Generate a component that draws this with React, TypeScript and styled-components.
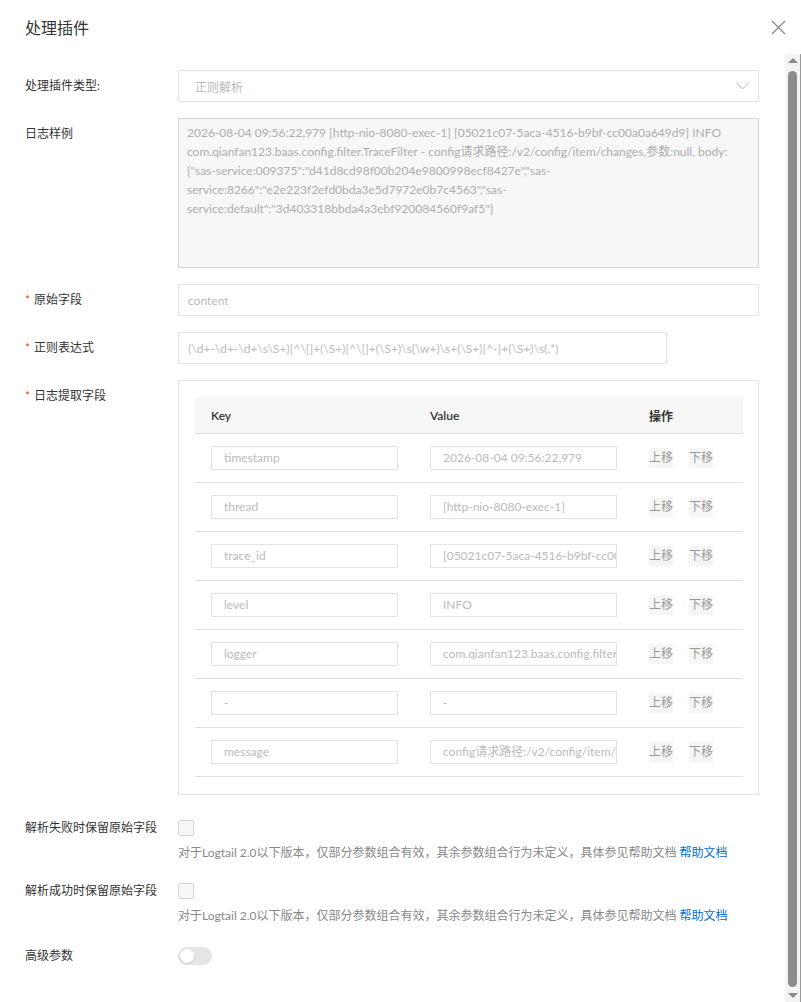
import React from "react";
import styled, { createGlobalStyle } from "styled-components";

const Global = createGlobalStyle`
  html, body { margin: 0; padding: 0; background: #fff; }
  body { font-family: Lato, "Noto Sans CJK SC", sans-serif; font-size: 12px; color: #333; }
  * { box-sizing: border-box; }
`;

const Modal = styled.div`
  width: 801px;
  height: 1002px;
  display: flex;
  flex-direction: column;
  background: #fff;
  overflow: hidden;
`;

const Header = styled.div`
  height: 54px;
  flex: none;
  display: flex;
  align-items: center;
  justify-content: space-between;
  padding: 0 15px 0 25px;
`;

const Title = styled.div`
  font-size: 16px;
  color: #333;
  line-height: 20px;
  margin-top: 2px;
`;

const CloseBtn = styled.div`
  width: 16px;
  height: 16px;
  display: flex;
  align-items: center;
  justify-content: center;
  margin-top: 1px;
`;

const Body = styled.div`
  flex: 1;
  display: flex;
  min-height: 0;
`;

const Content = styled.div`
  flex: 1;
  padding: 16px 26px 0 25px;
`;

const ScrollCol = styled.div`
  width: 16px;
  flex: none;
  display: flex;
  flex-direction: column;
  align-items: center;
  background: #f3f3f3;
  border-right: 1px solid #9a9a9a;
  padding: 4px 0 4px 0;
`;

const Arrow = styled.div<{ $down?: boolean }>`
  width: 0;
  height: 0;
  border-left: 5px solid transparent;
  border-right: 5px solid transparent;
  ${(p) =>
    p.$down
      ? "border-top: 5px solid #8a8a8a; margin-top: 6px;"
      : "border-bottom: 5px solid #8a8a8a; margin-bottom: 6px;"}
  margin-left: 1px;
  flex: none;
`;

const Thumb = styled.div`
  flex: 1;
  width: 9px;
  margin-left: 0px;
  margin-top: 2px;
  border-radius: 5px;
  background: #8c8c8c;
`;

const FormItem = styled.div<{ $mb?: number }>`
  display: grid;
  grid-template-columns: 153px 1fr;
  margin-bottom: ${(p) => (p.$mb ?? 16)}px;
`;

const Label = styled.div`
  line-height: 32px;
  font-size: 12px;
  color: #333;
  white-space: nowrap;
`;

const Req = styled.span`
  color: #e84738;
  margin-right: 4px;
`;

const Control = styled.div`
  display: flex;
  flex-direction: column;
  min-width: 0;
`;

const InputBox = styled.div<{ $w?: number }>`
  height: 32px;
  width: ${(p) => (p.$w ? `${p.$w}px` : "100%")};
  border: 1px solid #e3e3e3;
  background: #fff;
  display: flex;
  align-items: center;
  padding: 0 9px;
  color: #bbb;
  font-size: 12px;
  white-space: nowrap;
  overflow: hidden;
`;

const SelectBox = styled(InputBox)`
  justify-content: space-between;
  padding: 0 9px 0 16px;
`;

const LogArea = styled.div`
  height: 150px;
  border: 1px solid #d6d6d6;
  background: #f7f7f7;
  padding: 4px 8px;
  color: #adadad;
  font-size: 12px;
  line-height: 19px;
`;

const LogLine = styled.div`
  white-space: nowrap;
`;

const ExtractBox = styled.div`
  border: 1px solid #e3e3e3;
  padding: 16px 16px 17px 16px;
`;

const Table = styled.div`
  width: 548px;
`;

const Row = styled.div<{ $head?: boolean }>`
  display: grid;
  grid-template-columns: 219px 219px 110px;
  align-items: center;
  height: ${(p) => (p.$head ? 37 : 49)}px;
  border-bottom: 1px solid #dedee2;
  background: ${(p) => (p.$head ? "#f7f7f7" : "#fff")};
`;

const HeadCell = styled.div`
  padding-left: 16px;
  color: #333;
  font-size: 12px;
  font-weight: 600;
`;

const Cell = styled.div`
  padding-left: 16px;
  display: flex;
  align-items: center;
  gap: 16px;
`;

const FieldBox = styled.div`
  width: 187px;
  height: 24px;
  border: 1px solid #e3e3e3;
  padding: 0 12px;
  line-height: 22px;
  color: #bbb;
  font-size: 12px;
  white-space: nowrap;
  overflow: hidden;
`;

const MoveBtn = styled.div`
  height: 20px;
  width: 24px;
  background: #f5f5f5;
  color: #999;
  font-size: 12px;
  line-height: 20px;
  text-align: center;
`;

const CheckLine = styled.div`
  height: 32px;
  display: flex;
  align-items: center;
`;

const CheckBox = styled.div`
  width: 16px;
  height: 16px;
  border: 1px solid #d4d4d4;
  border-radius: 2px;
  background: #f7f7f7;
`;

const Help = styled.div`
  line-height: 18px;
  color: #888;
  font-size: 12px;
  white-space: nowrap;
`;

const HelpLink = styled.span`
  color: #0070cc;
  margin-left: 3px;
`;

const Switch = styled.div`
  width: 34px;
  height: 18px;
  border-radius: 9px;
  background: #e5e5e5;
  display: flex;
  align-items: center;
  padding-left: 2px;
`;

const Knob = styled.div`
  width: 14px;
  height: 14px;
  border-radius: 50%;
  background: #fff;
  box-shadow: 0 1px 2px rgba(0, 0, 0, 0.15);
`;

const logLines = [
  "2026-08-04 09:56:22,979 [http-nio-8080-exec-1] [05021c07-5aca-4516-b9bf-cc00a0a649d9] INFO",
  "com.qianfan123.baas.config.filter.TraceFilter - config请求路径:/v2/config/item/changes,参数:null, body:",
  '{"sas-service:009375":"d41d8cd98f00b204e9800998ecf8427e","sas-',
  'service:8266":"e2e223f2efd0bda3e5d7972e0b7c4563","sas-',
  'service:default":"3d403318bbda4a3ebf920084560f9af5"}',
];

const fields: [string, string][] = [
  ["timestamp", "2026-08-04 09:56:22,979"],
  ["thread", "[http-nio-8080-exec-1]"],
  ["trace_id", "[05021c07-5aca-4516-b9bf-cc00a0a649d9]"],
  ["level", "INFO"],
  ["logger", "com.qianfan123.baas.config.filter.TraceFilter"],
  ["-", "-"],
  ["message", "config请求路径:/v2/config/item/changes,参数:null"],
];

const helpText = "对于Logtail 2.0以下版本，仅部分参数组合有效，其余参数组合行为未定义，具体参见帮助文档";

export default function App() {
  return (
    <>
      <Global />
      <Modal>
        <Header>
          <Title>处理插件</Title>
          <CloseBtn>
            <svg width="15" height="15" viewBox="0 0 15 15">
              <path d="M1 1 L14 14 M14 1 L1 14" stroke="#8a8a8a" strokeWidth="1.4" fill="none" />
            </svg>
          </CloseBtn>
        </Header>
        <Body>
          <Content>
            <FormItem>
              <Label>处理插件类型:</Label>
              <Control>
                <SelectBox>
                  <span>正则解析</span>
                  <svg width="13" height="8" viewBox="0 0 13 8">
                    <path d="M0.5 0.8 L6.5 7 L12.5 0.8" stroke="#b0b0b0" strokeWidth="1" fill="none" />
                  </svg>
                </SelectBox>
              </Control>
            </FormItem>
            <FormItem>
              <Label>日志样例</Label>
              <Control>
                <LogArea>
                  {logLines.map((l, i) => (
                    <LogLine key={i}>{l}</LogLine>
                  ))}
                </LogArea>
              </Control>
            </FormItem>
            <FormItem>
              <Label>
                <Req>*</Req>原始字段
              </Label>
              <Control>
                <InputBox>content</InputBox>
              </Control>
            </FormItem>
            <FormItem>
              <Label>
                <Req>*</Req>正则表达式
              </Label>
              <Control>
                <InputBox $w={489}>{"(\\d+-\\d+-\\d+\\s\\S+)[^\\[]+(\\S+)[^\\[]+(\\S+)\\s(\\w+)\\s+(\\S+)[^-]+(\\S+)\\s(.*)"}</InputBox>
              </Control>
            </FormItem>
            <FormItem $mb={17}>
              <Label>
                <Req>*</Req>日志提取字段
              </Label>
              <Control>
                <ExtractBox>
                  <Table>
                    <Row $head>
                      <HeadCell>Key</HeadCell>
                      <HeadCell>Value</HeadCell>
                      <HeadCell>操作</HeadCell>
                    </Row>
                    {fields.map(([k, v], i) => (
                      <Row key={i}>
                        <Cell>
                          <FieldBox>{k}</FieldBox>
                        </Cell>
                        <Cell>
                          <FieldBox>{v}</FieldBox>
                        </Cell>
                        <Cell>
                          <MoveBtn>上移</MoveBtn>
                          <MoveBtn>下移</MoveBtn>
                        </Cell>
                      </Row>
                    ))}
                  </Table>
                </ExtractBox>
              </Control>
            </FormItem>
            <FormItem $mb={13}>
              <Label>解析失败时保留原始字段</Label>
              <Control>
                <CheckLine>
                  <CheckBox />
                </CheckLine>
                <Help>
                  {helpText}
                  <HelpLink>帮助文档</HelpLink>
                </Help>
              </Control>
            </FormItem>
            <FormItem $mb={15}>
              <Label>解析成功时保留原始字段</Label>
              <Control>
                <CheckLine>
                  <CheckBox />
                </CheckLine>
                <Help>
                  {helpText}
                  <HelpLink>帮助文档</HelpLink>
                </Help>
              </Control>
            </FormItem>
            <FormItem>
              <Label>高级参数</Label>
              <Control>
                <CheckLine>
                  <Switch>
                    <Knob />
                  </Switch>
                </CheckLine>
              </Control>
            </FormItem>
          </Content>
          <ScrollCol>
            <Arrow />
            <Thumb />
            <Arrow $down />
          </ScrollCol>
        </Body>
      </Modal>
    </>
  );
}
